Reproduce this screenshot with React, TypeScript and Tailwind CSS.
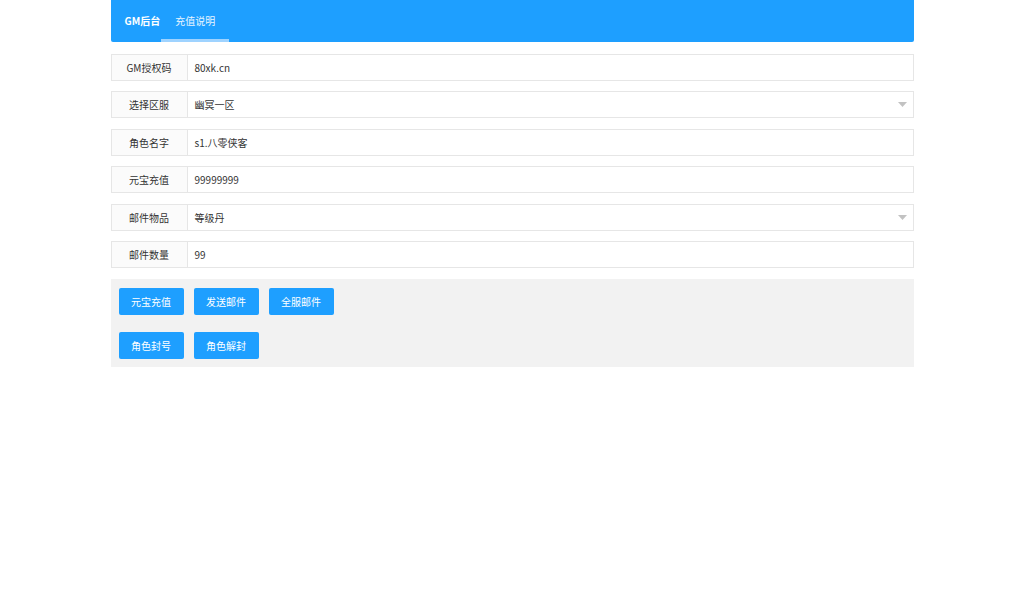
const rows: { label: string; value: string; select?: boolean }[] = [
  { label: 'GM授权码', value: '80xk.cn' },
  { label: '选择区服', value: '幽冥一区', select: true },
  { label: '角色名字', value: 's1.八零侠客' },
  { label: '元宝充值', value: '99999999' },
  { label: '邮件物品', value: '等级丹', select: true },
  { label: '邮件数量', value: '99' },
];

function Btn({ children }: { children: string }) {
  return (
    <button className="h-[27px] w-[65px] rounded-[2px] bg-[#1E9FFF] text-[10px] text-white">
      {children}
    </button>
  );
}

export default function App() {
  return (
    <div
      className="min-h-[605px] w-full bg-white text-[10px] text-[#333]"
      style={{ fontFamily: '"Noto Sans CJK SC", "Liberation Sans", sans-serif' }}
    >
      <div className="mx-auto w-[803px]">
        {/* header */}
        <div className="flex h-[42px] items-stretch rounded-b-[2px] bg-[#1E9FFF] pl-[14px] text-white">
          <div className="flex items-center pb-[1px] text-[10px] font-bold">GM后台</div>
          <div className="relative ml-[1px] flex w-[68px] items-center justify-center pb-[1px] text-[10px] text-white/90">
            充值说明
            <div className="absolute bottom-0 left-0 h-[3px] w-full bg-[#9fd3ff]" />
          </div>
        </div>

        {/* form rows */}
        <div className="mt-[12px] flex flex-col gap-[10.4px]">
          {rows.map((r) => (
            <div key={r.label} className="flex h-[27px] border border-[#e6e6e6]">
              <div className="flex w-[76px] shrink-0 items-center justify-center border-r border-[#e6e6e6] bg-[#fbfbfb]">
                {r.label}
              </div>
              <div className="flex flex-1 items-center justify-between bg-white pl-[7px] pr-[6px]">
                <span>{r.value}</span>
                {r.select && (
                  <svg width="9" height="5" viewBox="0 0 9 5">
                    <path d="M0 0 L9 0 L4.5 5 Z" fill="#c2c2c2" />
                  </svg>
                )}
              </div>
            </div>
          ))}
        </div>

        {/* buttons */}
        <div className="mt-[11px] flex flex-col gap-[17px] bg-[#f2f2f2] px-[8px] pb-[8px] pt-[9px]">
          <div className="flex gap-[10px]">
            <Btn>元宝充值</Btn>
            <Btn>发送邮件</Btn>
            <Btn>全服邮件</Btn>
          </div>
          <div className="flex gap-[10px]">
            <Btn>角色封号</Btn>
            <Btn>角色解封</Btn>
          </div>
        </div>
      </div>
    </div>
  );
}
